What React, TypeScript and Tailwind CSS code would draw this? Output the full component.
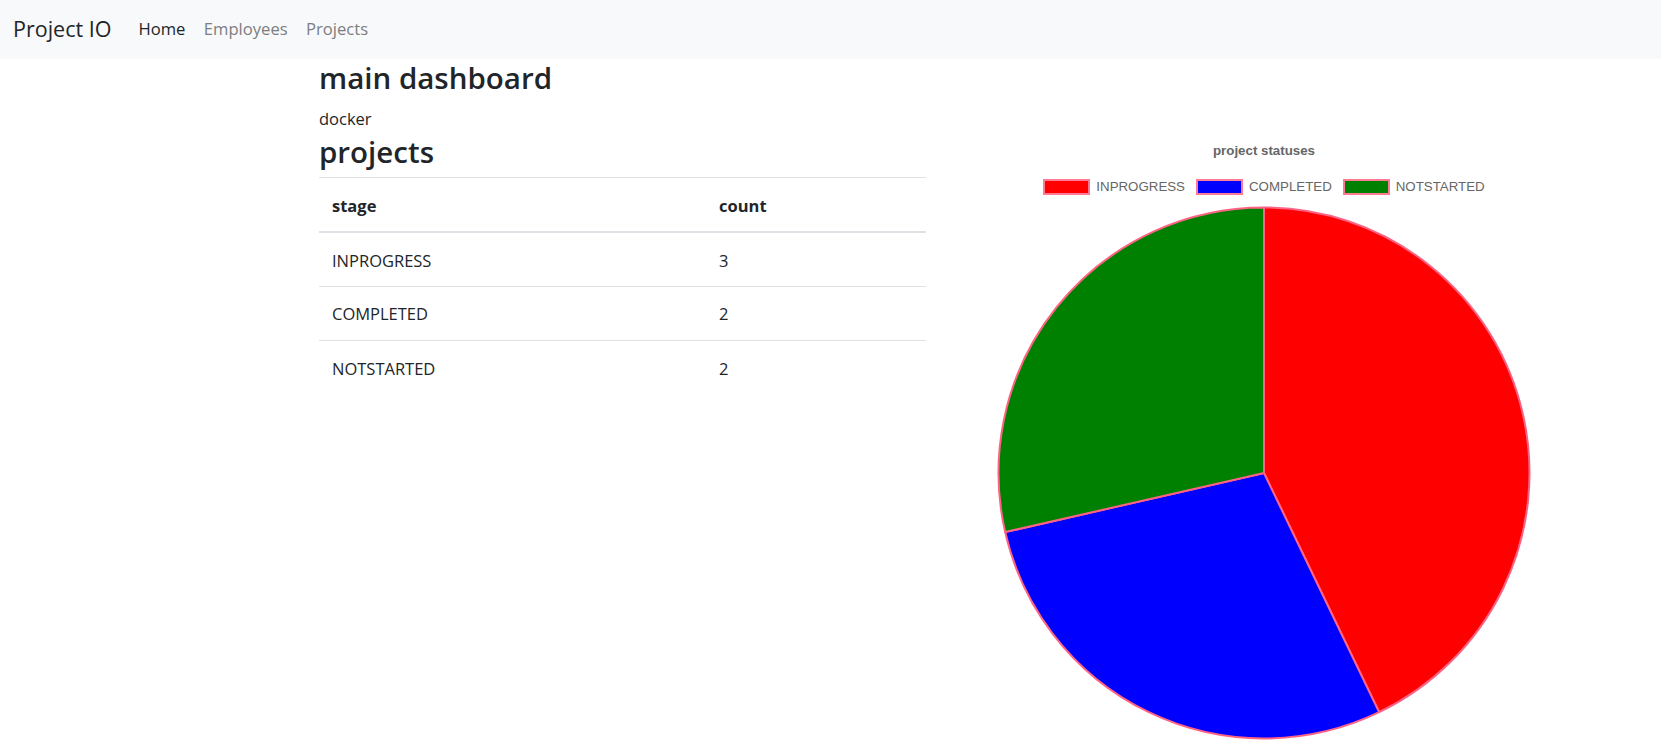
import React from "react";

const rows = [
  { stage: "INPROGRESS", count: 3, color: "#ff0000" },
  { stage: "COMPLETED", count: 2, color: "#0000ff" },
  { stage: "NOTSTARTED", count: 2, color: "#008000" },
];

function PieChart() {
  const total = rows.reduce((s, r) => s + r.count, 0);
  const cx = 304;
  const cy = 270;
  const r = 265.5;
  let a = -Math.PI / 2;
  const slices = rows.map((row) => {
    const start = a;
    const end = a + (row.count / total) * Math.PI * 2;
    a = end;
    const x1 = cx + r * Math.cos(start);
    const y1 = cy + r * Math.sin(start);
    const x2 = cx + r * Math.cos(end);
    const y2 = cy + r * Math.sin(end);
    const large = end - start > Math.PI ? 1 : 0;
    return {
      d: `M${cx},${cy} L${x1},${y1} A${r},${r} 0 ${large} 1 ${x2},${y2} Z`,
      color: row.color,
    };
  });

  return (
    <svg width={608} height={540} viewBox="0 0 608 540">
      {slices.map((s, i) => (
        <path key={i} d={s.d} fill={s.color} stroke="#ff6384" strokeWidth={2} strokeLinejoin="bevel" />
      ))}
    </svg>
  );
}

export default function App() {
  return (
    <div className="min-h-screen bg-white text-[#212529] font-['Open_Sans',sans-serif]">
      <nav className="h-[59px] bg-[#f8f9fa] flex items-center px-[13px]">
        <span className="text-[21.5px] mr-[27px]">Project IO</span>
        <div className="flex items-center gap-[18.5px] text-[16.6px]">
          <a className="text-[#212529]">Home</a>
          <a className="text-[#7c7e80]">Employees</a>
          <a className="text-[#7c7e80]">Projects</a>
        </div>
      </nav>

      <main className="pl-[319px]">
        <h2 className="text-[29.5px] font-semibold leading-[1.2] mt-[1px]">main dashboard</h2>
        <p className="text-[16.5px] leading-[24px] mt-[12px]">docker</p>

        <div className="flex items-start mt-[3px]">
          <div className="w-[607px]">
            <h2 className="text-[29.5px] font-semibold leading-[1.2]">projects</h2>
            <table className="w-full table-fixed mt-[7px] border-collapse text-[16.5px]">
              <thead>
                <tr className="border-t border-[#dee2e6]">
                  <th className="text-left font-bold px-[13px] pt-[4px] h-[55px] border-b-2 border-[#dee2e6] w-[387px]">stage</th>
                  <th className="text-left font-bold px-[13px] pt-[4px] h-[55px] border-b-2 border-[#dee2e6]">count</th>
                </tr>
              </thead>
              <tbody>
                {rows.map((row, i) => (
                  <tr key={row.stage} className={i > 0 ? "border-t border-[#dee2e6]" : ""}>
                    <td className="px-[13px] pt-[3px] h-[54px]">{row.stage}</td>
                    <td className="px-[13px] pt-[3px] h-[54px]">{row.count}</td>
                  </tr>
                ))}
              </tbody>
            </table>
          </div>

          <div className="ml-[34px] w-[608px] flex flex-col items-center font-['Liberation_Sans',Arial,sans-serif] text-[#666666]">
            <div className="text-[13.3px] font-bold leading-[16px] mt-[9px]">project statuses</div>
            <div className="flex items-center mt-[20px] text-[13.3px] leading-[16px]">
              {rows.map((row) => (
                <div key={row.stage} className="flex items-center mr-[11px] last:mr-0">
                  <span
                    className="inline-block w-[47px] h-[16px] border-2 border-[#ff7b95] mr-[6px]"
                    style={{ backgroundColor: row.color }}
                  />
                  <span>{row.stage}</span>
                </div>
              ))}
            </div>
            <div className="mt-[8px]">
              <PieChart />
            </div>
          </div>
        </div>
      </main>
    </div>
  );
}
